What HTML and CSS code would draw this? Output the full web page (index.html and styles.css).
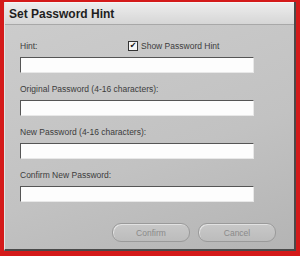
FILE: index.html
```html
<!DOCTYPE html>
<html lang="en">
  <head>
    <meta charset="UTF-8" />
    <title>Set Password Hint</title>
    <link rel="stylesheet" href="styles.css">
  </head>
  <body>
    <div class="dialog">
      <div class="title-bar">Set Password Hint</div>
      <div class="dialog-body">
        <div class="field">
          <div class="label-row">
            <span class="label">Hint:</span>
            <label class="check">
              <span class="box">&#10004;</span>
              <span>Show Password Hint</span>
            </label>
          </div>
          <div class="input"></div>
        </div>
        <div class="field">
          <div class="label-row"><span class="label">Original Password (4-16 characters):</span></div>
          <div class="input"></div>
        </div>
        <div class="field">
          <div class="label-row"><span class="label">New Password (4-16 characters):</span></div>
          <div class="input"></div>
        </div>
        <div class="field">
          <div class="label-row"><span class="label">Confirm New Password:</span></div>
          <div class="input"></div>
        </div>
        <div class="buttons">
          <button class="btn">Confirm</button>
          <button class="btn">Cancel</button>
        </div>
      </div>
    </div>
  </body>
</html>
```
FILE: styles.css
```css
body {
  margin: 0;
  width: 300px;
  height: 256px;
  background: #d41a1a;
  font-family: "Liberation Sans", sans-serif;
  overflow: hidden;
}

.dialog {
  margin: 2px 0 0 4px;
  width: 289px;
  height: 247px;
  display: flex;
  flex-direction: column;
  background: linear-gradient(160deg, #cdcdcd 0%, #c2c2c2 60%, #b4b4b4 100%);
  border-left: 1px solid #e4e4e4;
  border-right: 2px solid #4a4a4a;
  border-bottom: 2px solid #4a4a4a;
}

.title-bar {
  height: 21px;
  padding-left: 4px;
  display: flex;
  align-items: center;
  font-weight: bold;
  font-size: 12px;
  color: #1e1e1e;
  background: linear-gradient(#ededed, #d6d6d6);
  border-top: 1px solid #f6f6f6;
  border-bottom: 1px solid #a8a8a8;
}

.dialog-body {
  flex: 1;
  padding: 14px 0 0 15px;
  display: flex;
  flex-direction: column;
}

.field {
  display: flex;
  flex-direction: column;
  margin-bottom: 9px;
}

.label-row {
  display: flex;
  align-items: center;
  height: 14px;
  margin-bottom: 4px;
  font-size: 8.5px;
  color: #3c3c3c;
}

.label {
  width: 108px;
  white-space: nowrap;
}

.check {
  display: flex;
  align-items: center;
  gap: 3px;
}

.box {
  width: 8px;
  height: 8px;
  background: #f4f4f4;
  border: 1px solid #333;
  font-family: "DejaVu Sans", sans-serif;
  font-size: 8px;
  line-height: 8px;
  text-align: center;
  color: #111;
}

.input {
  width: 232px;
  height: 14px;
  background: #fdfdfd;
  border-top: 1px solid #555;
  border-left: 1px solid #555;
  border-right: 1px solid #e8e8e8;
  border-bottom: 1px solid #e8e8e8;
}

.buttons {
  display: flex;
  gap: 8px;
  margin: 12px 0 0 92px;
}

.btn {
  width: 78px;
  height: 19px;
  padding: 0;
  border: 1px solid #9a9a9a;
  border-radius: 9px;
  background: linear-gradient(#c8c8c8, #bcbcbc);
  box-shadow: inset 1px 1px 0 #e2e2e2;
  font-family: "Liberation Sans", sans-serif;
  font-size: 8.5px;
  color: #8a8a8a;
}
```
